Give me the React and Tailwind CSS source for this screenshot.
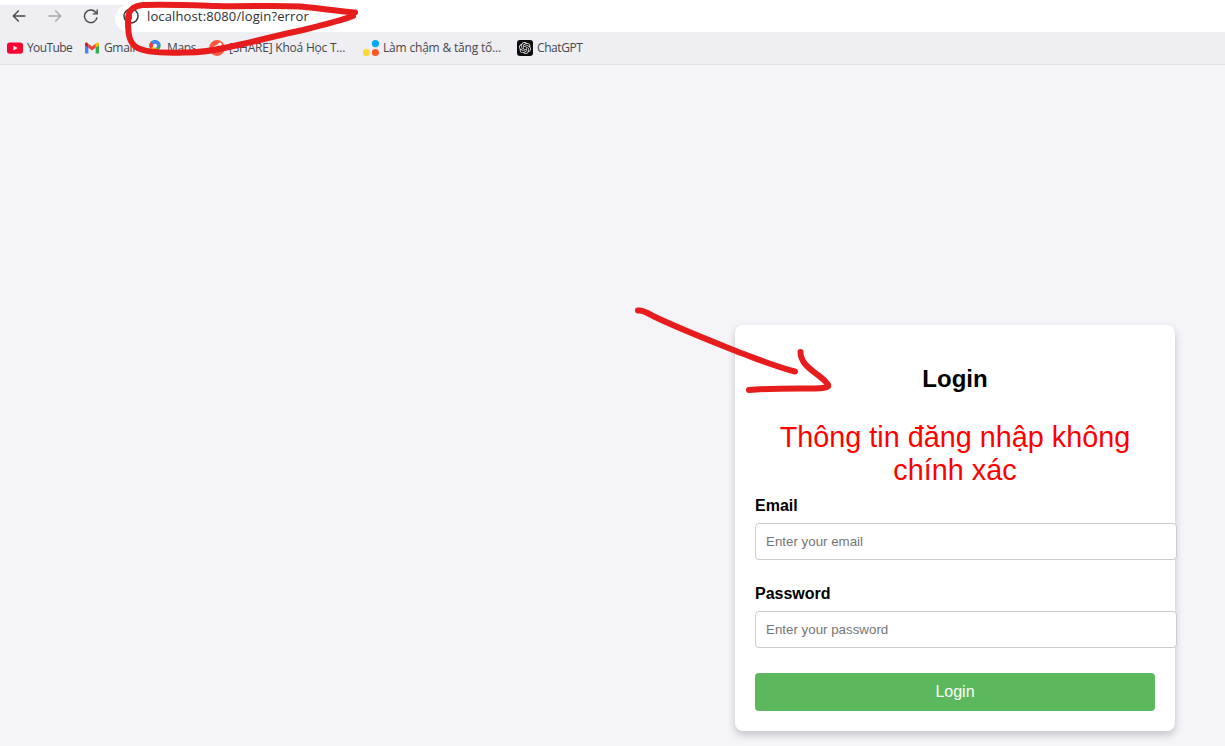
import { SiOpenai } from "react-icons/si";

function BackIcon({ className }) {
  return (
    <svg className={className} width="16" height="16" viewBox="0 0 16 16" fill="none" stroke="currentColor" strokeWidth="1.4">
      <path d="M14.500 8H2.300M7.800 2.500L2.300 8l5.500 5.500" />
    </svg>
  );
}

function ReloadIcon() {
  return (
    <svg width="16" height="16" viewBox="0 0 16 16" fill="none" stroke="#47474a" strokeWidth="1.4">
      <path d="M14 9.300A6.300 6.300 0 1 1 12.600 4.200L14 5.600" />
      <path d="M14.200 1.500v4.400H9.800" />
    </svg>
  );
}

function YouTubeIcon() {
  return (
    <svg width="16" height="16" viewBox="0 0 16 16">
      <rect x="0" y="2.4" width="16" height="11.4" rx="2.8" fill="#ff0033" />
      <path d="M6.400 5.800v4.600L10.600 8.100z" fill="#fff" />
    </svg>
  );
}

function GmailIcon() {
  return (
    <svg width="16" height="16" viewBox="0 0 16 16">
      <path d="M1 4v8.400c0 .6.4 1 1 1h2.400V6.600z" fill="#4285f4" />
      <path d="M11.600 6.600v6.800H14c.6 0 1-.4 1-1V4z" fill="#34a853" />
      <path d="M11.600 3.900v3.900L15 5.200V4c0-1.400-1.500-2-2.500-1.200z" fill="#fbbc04" />
      <path d="M4.400 7.800V3.700L8 6.400l3.600-2.700v4.100L8 10.500z" fill="#ea4335" />
      <path d="M1 4v1.200l3.400 2.600V3.900l-.9-.9C2.500 2.200 1 2.700 1 4z" fill="#c5221f" />
    </svg>
  );
}

function MapsIcon() {
  return (
    <svg width="16" height="16" viewBox="0 0 16 16">
      <clipPath id="pin">
        <path d="M8 .1a5.700 5.700 0 0 0-5.700 5.700c0 4 4.700 5 5.700 9.900 1-4.900 5.700-5.900 5.700-9.900A5.700 5.700 0 0 0 8 .1z" />
      </clipPath>
      <g clipPath="url(#pin)">
        <path d="M0 0h16v16H0z" fill="#34a853" />
        <path d="M0 12L5 6l5 2-5 7z" fill="#fbbc04" />
        <path d="M0 0h5L8 4 3 9.500 0 8z" fill="#ea4335" />
        <path d="M3.500 1.500L7 0h7v4L8 9 6.500 4.500z" fill="#4285f4" />
      </g>
      <circle cx="8" cy="5.800" r="2.100" fill="#fff" />
    </svg>
  );
}

function ShareIcon() {
  return (
    <svg width="16" height="16" viewBox="0 0 16 16">
      <circle cx="8" cy="8" r="7.900" fill="#f9593f" />
      <path d="M2.600 8.600L10.500 4M10.500 4l.8 6" stroke="#fff" strokeWidth="1.400" fill="none" />
      <circle cx="3.700" cy="8.300" r="1.400" fill="#fff" />
      <circle cx="11" cy="4.200" r="1.700" fill="#fff" />
      <circle cx="11.200" cy="10.200" r="1.500" fill="#fff" />
    </svg>
  );
}

function DotsIcon() {
  return (
    <svg width="16" height="16" viewBox="0 0 16 16">
      <circle cx="12.400" cy="3.600" r="3.600" fill="#03a9f4" />
      <circle cx="3.500" cy="12.400" r="3.500" fill="#fdd835" />
      <circle cx="12.400" cy="12.400" r="3.500" fill="#ff5722" />
    </svg>
  );
}

function ChatGptIcon() {
  return (
    <span className="flex size-4 items-center justify-center rounded-[3px] bg-[#0d0d0d] text-[#f0f0f0]">
      <SiOpenai size={12} />
    </span>
  );
}

function Bookmark({ icon, label, className }) {
  return (
    <a className={`flex h-4 shrink-0 items-center gap-1 whitespace-nowrap ${className}`}>
      {icon}
      <span>{label}</span>
    </a>
  );
}

function Browser() {
  return (
    <header className="shrink-0 bg-white font-['Open_Sans','Noto_Sans',sans-serif] text-[#47474a]">
      <div className="h-[5px]" />
      <div className="flex h-[27px] bg-[#eeeef3]">
        <div className="flex w-[115px] items-start gap-5 pl-[11px] pt-[3px]">
          <BackIcon className="shrink-0 text-[#47474a]" />
          <BackIcon className="shrink-0 rotate-180 text-[#a9a9ad]" />
          <span className="shrink-0"><ReloadIcon /></span>
        </div>
        <div className="flex flex-1 items-start rounded-l-[16px] bg-white pl-2 pt-[3px] text-[#303033]">
          <svg className="shrink-0" width="16" height="16" viewBox="0 0 16 16" fill="none" stroke="#3c3c40" strokeWidth="1.500">
            <circle cx="8" cy="8" r="7" />
            <path d="M8 7v4.500M8 4.300v1.500" />
          </svg>
          <span className="ml-2 text-[13px] leading-4 tracking-[0.13px]">localhost:8080/login?error</span>
        </div>
      </div>
      <nav className="flex h-[33px] items-center border-b border-[#dfdfe4] bg-[#eeeef3] pl-[7px] text-[12px] leading-4">
        <Bookmark icon={<YouTubeIcon />} label="YouTube" className="w-[77px] tracking-[-0.6px]" />
        <Bookmark icon={<GmailIcon />} label="Gmail" className="w-[63px] tracking-[-0.35px]" />
        <Bookmark icon={<MapsIcon />} label="Maps" className="w-[62px] tracking-[-0.35px]" />
        <Bookmark icon={<ShareIcon />} label="[SHARE] Khoá Học T..." className="w-[154px] tracking-[-0.22px]" />
        <Bookmark icon={<DotsIcon />} label="Làm chậm & tăng tố..." className="w-[154px] tracking-[-0.19px]" />
        <Bookmark icon={<ChatGptIcon />} label="ChatGPT" className="tracking-[-0.42px]" />
      </nav>
    </header>
  );
}

function Field({ label, type, placeholder }) {
  return (
    <div className="mb-[25px] flex flex-col">
      <label className="mb-2 text-base leading-[18px] font-bold">{label}</label>
      <input
        type={type}
        placeholder={placeholder}
        className="h-[37px] w-[422px] rounded border border-[#cccccc] bg-white px-2.5 text-[13.333px] placeholder:text-[#757575]"
      />
    </div>
  );
}

function LoginCard() {
  return (
    <form className="flex h-[406px] w-[440px] flex-col rounded-lg bg-white px-5 pt-10 shadow-[0_4px_8px_rgba(0,0,0,0.2)]">
      <h2 className="text-center text-2xl leading-7 font-bold">Login</h2>
      <p className="mt-7 mb-[10px] text-center text-[28.8px] leading-[33px] text-[#ff0000]">
        Thông tin đăng nhập không chính xác
      </p>
      <Field label="Email" type="email" placeholder="Enter your email" />
      <Field label="Password" type="password" placeholder="Enter your password" />
      <button type="button" className="h-[38px] rounded bg-[#5cb85c] text-base text-white">Login</button>
    </form>
  );
}

function Annotations() {
  return (
    <svg className="pointer-events-none absolute inset-0" width="1225" height="746" viewBox="0 0 1225 746" fill="none" stroke="#e71d1d" strokeWidth="6" strokeLinecap="round" strokeLinejoin="round">
      <path d="M355 12.500C335 11 318 8 300 6.500C270 5 246 7 215 6C187 5 164 4 143 5C132 6 128 11 128 20C128 34 129 42 136 47C145 53 169 53 184 52.500C202 53 216 50 229 47C257 41 279 35 303 30C323 25 343 20 353 16" />
      <path d="M638 310.500C643 310 648 313 653 316C680 329 711 341 741 353C760 360 777 367 795 371.500" />
      <path d="M800.500 352C800.500 365 814 371 825 381C831 387 829 388 815 388.500C794 388.500 774 388 749 390" />
    </svg>
  );
}

export default function App() {
  return (
    <div className="relative flex h-[746px] w-[1225px] flex-col overflow-hidden bg-[#f4f4f9] font-['Liberation_Sans',Arial,sans-serif] text-black">
      <Browser />
      <main className="flex flex-1 items-end justify-end pr-[50px] pb-[15px]">
        <LoginCard />
      </main>
      <Annotations />
    </div>
  );
}
